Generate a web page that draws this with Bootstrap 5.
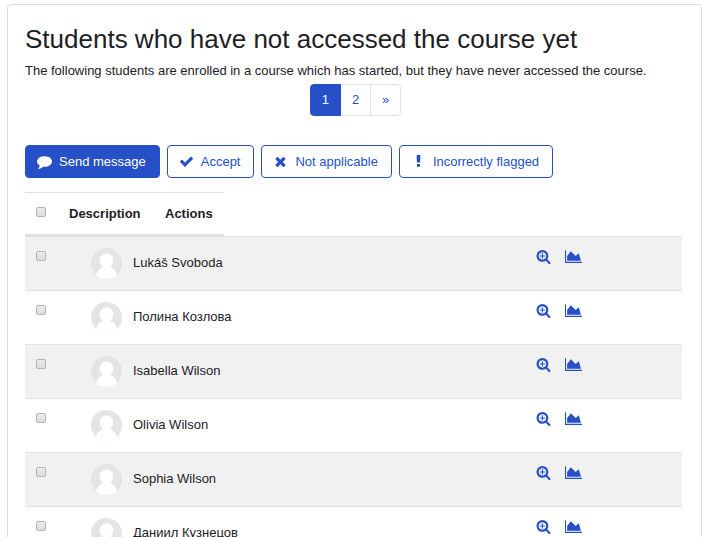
<!DOCTYPE html>
<html lang="en">
<head>
<meta charset="utf-8">
<meta name="viewport" content="width=device-width, initial-scale=1">
<title>Students who have not accessed the course yet</title>
<link href="https://cdn.jsdelivr.net/npm/bootstrap@5.3.0/dist/css/bootstrap.min.css" rel="stylesheet">
<style>
:root { --brand: #2650c8; --line: #dee2e6; }
body { font: 13px/20px "Liberation Sans", Arial, sans-serif; color: #1d2125; padding: 4px 0 0 7px; }
.insight { border-color: #dcdee0; border-radius: 4px; padding: 17px 15px 17px 17px; }
.insight h2 { font-size: 26px; line-height: 32px; margin: 1px 0 6px; }
.pagination { --bs-pagination-font-size: 13px; --bs-pagination-color: var(--brand); --bs-pagination-active-bg: var(--brand); --bs-pagination-active-border-color: var(--brand); --bs-pagination-padding-x: 11px; --bs-pagination-padding-y: 5px; --bs-pagination-border-radius: 4px; margin: 3px 0 29px; }
.page-link { min-width: 31px; text-align: center; }
.bulk { gap: 7px; margin-bottom: 14px; }
.bulk .btn { --bs-btn-font-size: 13px; --bs-btn-line-height: 20px; --bs-btn-border-radius: 4px; --bs-btn-color: var(--brand); --bs-btn-border-color: var(--brand); --bs-btn-bg: #fff; --bs-btn-hover-bg: var(--brand); --bs-btn-hover-color: #fff; padding: 6px 13px 6px 11px; height: 33px; gap: 7px; }
.bulk .btn-send { --bs-btn-bg: var(--brand); --bs-btn-color: #fff; }
.glyph { width: 15px; height: 15px; fill: currentColor; flex: none; }
.glyph-wide { width: 17px; }
.students { margin: 0 4px 0 0; }
.students th, .students td { padding: 0; display: block; }
.students thead tr { width: 199px; max-width: 100%; height: 44px; border-top: 1px solid var(--line); border-bottom: 2px solid var(--line); }
.students tbody tr { height: 54px; border-top: 1px solid var(--line); }
.students tbody tr:nth-child(odd) { background: #f1f1f1; }
.students .pick { width: 44px; padding: 0 0 4px 11px; flex: none; line-height: 0; }
.students tbody .pick { padding-top: 14px; width: 66px; }
.students .title { width: 96px; }
.students .who { padding-top: 11px; flex: 1 1 0; line-height: 29px; }
.students .acts { width: 146px; padding-top: 12px; flex: none; gap: 14px; }
.acts a { color: var(--brand); line-height: 0; }
.pick input { appearance: none; display: block; width: 10px; height: 10px; margin: 0; border: 1px solid #b4b4b4; border-radius: 2px; background: linear-gradient(#ececec, #dcdcdc); }
.pick input:checked { background: var(--brand); }
.face { width: 31px; height: 31px; margin-right: 11px; flex: none; border-radius: 50%; overflow: hidden; }
</style>
<script src="https://cdn.jsdelivr.net/npm/bootstrap@5.3.0/dist/js/bootstrap.bundle.min.js"></script>
</head>
<body>
<svg class="d-none" aria-hidden="true">
  <symbol id="comment" viewBox="0 0 1792 1792"><path d="M1792 896q0 174-120 321.500t-326 233-450 85.500q-70 0-145-8-198 175-460 242-49 14-114 22-17 2-30.500-9t-17.500-29v-1q-3-4-.5-12t2-10 4.500-9.500l6-9 7-8.500 8-9q7-8 31-34.500t34.500-38 31-39.500 32.500-51 27-59 26-76q-157-89-247.500-220t-90.500-281q0-130 71-248.500t191-204.500 286-136.500 348-50.500q244 0 450 85.500t326 233 120 321.500z"/></symbol>
  <symbol id="check" viewBox="0 0 1792 1792"><path d="M1671 566q0 40-28 68l-724 724-136 136q-28 28-68 28t-68-28l-136-136-362-362q-28-28-28-68t28-68l136-136q28-28 68-28t68 28l294 295 656-657q28-28 68-28t68 28l136 136q28 28 28 68z"/></symbol>
  <symbol id="times" viewBox="0 0 1792 1792"><path d="M1490 1322q0 40-28 68l-136 136q-28 28-68 28t-68-28l-294-294-294 294q-28 28-68 28t-68-28l-136-136q-28-28-28-68t28-68l294-294-294-294q-28-28-28-68t28-68l136-136q28-28 68-28t68 28l294 294 294-294q28-28 68-28t68 28l136 136q28 28 28 68t-28 68l-294 294 294 294q28 28 28 68z"/></symbol>
  <symbol id="exclamation" viewBox="0 0 1792 1792"><path d="M1088 1248v224q0 26-19 45t-45 19h-256q-26 0-45-19t-19-45v-224q0-26 19-45t45-19h256q26 0 45 19t19 45zm30-1056l-28 768q-1 26-20.500 45t-45.500 19h-256q-26 0-45.500-19t-20.500-45l-28-768q-1-26 17.500-45t44.500-19h320q26 0 44.500 19t17.500 45z"/></symbol>
  <symbol id="zoom" viewBox="0 0 1792 1792"><path d="M1088 800v64q0 13-9.500 22.500t-22.500 9.500h-224v224q0 13-9.500 22.500t-22.500 9.500h-64q-13 0-22.500-9.500t-9.500-22.500v-224h-224q-13 0-22.500-9.500t-9.500-22.500v-64q0-13 9.500-22.500t22.500-9.500h224v-224q0-13 9.500-22.500t22.500-9.500h64q13 0 22.500 9.500t9.500 22.500v224h224q13 0 22.500 9.500t9.500 22.500zm128 32q0-185-131.500-316.500t-316.500-131.500-316.500 131.500-131.500 316.500 131.500 316.500 316.500 131.500 316.500-131.500 131.500-316.500zm512 832q0 53-37.500 90.500t-90.500 37.500q-54 0-90-38l-343-342q-179 124-399 124-143 0-273.500-55.500t-225-150-150-225-55.500-273.500 55.500-273.500 150-225 225-150 273.500-55.500 273.500 55.500 225 150 150 225 55.500 273.500q0 220-124 399l343 343q37 37 37 90z"/></symbol>
  <symbol id="chart" viewBox="0 0 2048 1792"><path d="M2048 1536v128h-2048v-1536h128v1408h1920zm-384-1024l256 896h-1664v-576l448-576 576 576z"/></symbol>
  <symbol id="face" viewBox="0 0 31 31"><path fill="#e4e4e4" d="M0 0h31v31H0z"/><path fill="#fff" d="M15.500 5.500c4 0 6.800 3 6.800 7 0 2.600-1 4.600-2.600 5.900v1c3.800 1 6.300 4.600 6.800 11.600h-22c.5-7 3-10.600 6.800-11.600v-1c-1.600-1.300-2.600-3.300-2.600-5.900 0-4 2.800-7 6.800-7z"/></symbol>
</svg>
<main class="card insight">
  <h2 class="fw-normal">Students who have not accessed the course yet</h2>
  <div>The following students are enrolled in a course which has started, but they have never accessed the course.</div>
  <nav aria-label="Page">
    <ul class="pagination justify-content-center">
      <li class="page-item active"><a class="page-link" href="#" aria-current="page">1</a></li>
      <li class="page-item"><a class="page-link" href="#">2</a></li>
      <li class="page-item"><a class="page-link" href="#" aria-label="Next page">»</a></li>
    </ul>
  </nav>
  <div class="bulk d-flex flex-wrap">
    <button type="button" class="btn btn-send d-flex align-items-center"><svg class="glyph"><use href="#comment"/></svg>Send message</button>
    <button type="button" class="btn d-flex align-items-center"><svg class="glyph"><use href="#check"/></svg>Accept</button>
    <button type="button" class="btn d-flex align-items-center"><svg class="glyph"><use href="#times"/></svg>Not applicable</button>
    <button type="button" class="btn d-flex align-items-center"><svg class="glyph"><use href="#exclamation"/></svg>Incorrectly flagged</button>
  </div>
  <table class="students d-block">
    <thead class="d-block">
      <tr class="d-flex align-items-center"><th class="pick"><input type="checkbox" aria-label="Select all"></th><th class="title">Description</th><th>Actions</th></tr>
    </thead>
    <tbody class="d-block">
      <tr class="d-flex"><td class="pick"><input type="checkbox" aria-label="Select Lukáš Svoboda"></td><td class="who"><div class="d-flex align-items-start"><svg class="face"><use href="#face"/></svg>Lukáš Svoboda</div></td><td class="acts d-flex"><a href="#" aria-label="View details"><svg class="glyph"><use href="#zoom"/></svg></a><a href="#" aria-label="Outline report"><svg class="glyph glyph-wide"><use href="#chart"/></svg></a></td></tr>
      <tr class="d-flex"><td class="pick"><input type="checkbox" aria-label="Select Полина Козлова"></td><td class="who"><div class="d-flex align-items-start"><svg class="face"><use href="#face"/></svg>Полина Козлова</div></td><td class="acts d-flex"><a href="#" aria-label="View details"><svg class="glyph"><use href="#zoom"/></svg></a><a href="#" aria-label="Outline report"><svg class="glyph glyph-wide"><use href="#chart"/></svg></a></td></tr>
      <tr class="d-flex"><td class="pick"><input type="checkbox" aria-label="Select Isabella Wilson"></td><td class="who"><div class="d-flex align-items-start"><svg class="face"><use href="#face"/></svg>Isabella Wilson</div></td><td class="acts d-flex"><a href="#" aria-label="View details"><svg class="glyph"><use href="#zoom"/></svg></a><a href="#" aria-label="Outline report"><svg class="glyph glyph-wide"><use href="#chart"/></svg></a></td></tr>
      <tr class="d-flex"><td class="pick"><input type="checkbox" aria-label="Select Olivia Wilson"></td><td class="who"><div class="d-flex align-items-start"><svg class="face"><use href="#face"/></svg>Olivia Wilson</div></td><td class="acts d-flex"><a href="#" aria-label="View details"><svg class="glyph"><use href="#zoom"/></svg></a><a href="#" aria-label="Outline report"><svg class="glyph glyph-wide"><use href="#chart"/></svg></a></td></tr>
      <tr class="d-flex"><td class="pick"><input type="checkbox" aria-label="Select Sophia Wilson"></td><td class="who"><div class="d-flex align-items-start"><svg class="face"><use href="#face"/></svg>Sophia Wilson</div></td><td class="acts d-flex"><a href="#" aria-label="View details"><svg class="glyph"><use href="#zoom"/></svg></a><a href="#" aria-label="Outline report"><svg class="glyph glyph-wide"><use href="#chart"/></svg></a></td></tr>
      <tr class="d-flex"><td class="pick"><input type="checkbox" aria-label="Select Даниил Кузнецов"></td><td class="who"><div class="d-flex align-items-start"><svg class="face"><use href="#face"/></svg>Даниил Кузнецов</div></td><td class="acts d-flex"><a href="#" aria-label="View details"><svg class="glyph"><use href="#zoom"/></svg></a><a href="#" aria-label="Outline report"><svg class="glyph glyph-wide"><use href="#chart"/></svg></a></td></tr>
    </tbody>
  </table>
</main>
</body>
</html>
